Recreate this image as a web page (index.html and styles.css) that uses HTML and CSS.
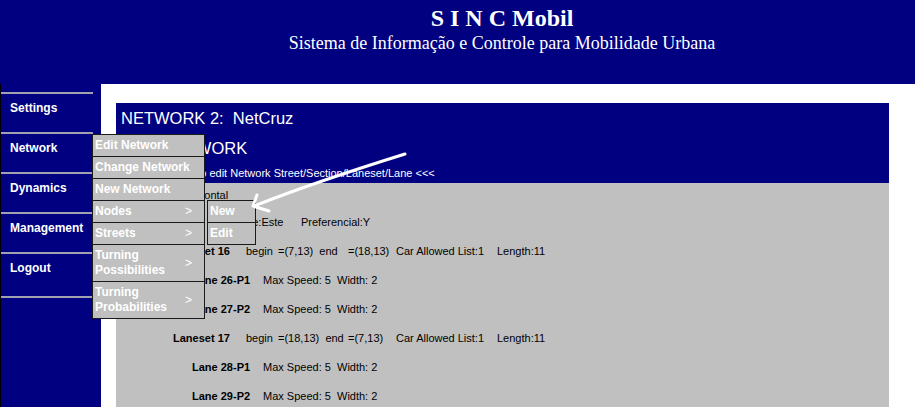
FILE: index.html
```html
<!DOCTYPE html>
<html lang="pt">
<head>
<meta charset="utf-8">
<title>SINC Mobil</title>
<link rel="stylesheet" href="styles.css">
</head>
<body>
<header class="top">
  <div class="title">S I N C Mobil</div>
  <div class="subtitle">Sistema de Informação e Controle para Mobilidade Urbana</div>
</header>
<div class="frame">
  <nav class="side">
    <div class="side-item">Settings</div>
    <div class="side-item">Network</div>
    <div class="side-item">Dynamics</div>
    <div class="side-item">Management</div>
    <div class="side-item side-last">Logout</div>
  </nav>
  <main class="main">
    <section class="panel-head">
      <div class="net-title">NETWORK 2:&nbsp; NetCruz</div>
      <div class="net-title">EDIT NETWORK</div>
      <div class="net-hint">&gt;&gt;&gt; Click to edit Network Street/Section/Laneset/Lane &lt;&lt;&lt;</div>
    </section>
    <section class="panel-body">
      <div class="row row-first"><span>Street 8: Horizontal</span></div>
      <div class="row row-street"><span class="c-sname">Name:Este</span><span>Preferencial:Y</span></div>
      <div class="row row-ls"><b class="c-ls">Laneset 16</b><span class="c-begin">begin</span><span class="c-v1">=(7,13)&nbsp; end</span><span class="c-v2">=(18,13)</span><span class="c-car">Car Allowed List:1</span><span>Length:11</span></div>
      <div class="row row-lane"><b class="c-lane">Lane 26-P1</b><span class="c-speed">Max Speed: 5</span><span>Width: 2</span></div>
      <div class="row row-lane"><b class="c-lane">Lane 27-P2</b><span class="c-speed">Max Speed: 5</span><span>Width: 2</span></div>
      <div class="row row-ls"><b class="c-ls">Laneset 17</b><span class="c-begin">begin</span><span class="c-v1">=(18,13)&nbsp; end</span><span class="c-v2">=(7,13)</span><span class="c-car">Car Allowed List:1</span><span>Length:11</span></div>
      <div class="row row-lane"><b class="c-lane">Lane 28-P1</b><span class="c-speed">Max Speed: 5</span><span>Width: 2</span></div>
      <div class="row row-lane"><b class="c-lane">Lane 29-P2</b><span class="c-speed">Max Speed: 5</span><span>Width: 2</span></div>
    </section>
  </main>
</div>

<div class="dropdown">
  <div class="dd-item">Edit Network</div>
  <div class="dd-item">Change Network</div>
  <div class="dd-item">New Network</div>
  <div class="dd-item"><span>Nodes</span><span class="gt">&gt;</span></div>
  <div class="dd-item"><span>Streets</span><span class="gt">&gt;</span></div>
  <div class="dd-item dd-tall"><span>Turning<br>Possibilities</span><span class="gt">&gt;</span></div>
  <div class="dd-item dd-tall"><span>Turning<br>Probabilities</span><span class="gt">&gt;</span></div>
</div>
<div class="submenu">
  <div class="dd-item">New</div>
  <div class="dd-item">Edit</div>
</div>

<svg class="arrow" width="915" height="407" viewBox="0 0 915 407" aria-hidden="true">
  <path d="M405 154 C360 168 310 184 254 206" fill="none" stroke="#fff" stroke-width="3" stroke-linecap="round"/>
  <path d="M257 195 L253 206 L269 211" fill="none" stroke="#fff" stroke-width="3" stroke-linecap="round" stroke-linejoin="round"/>
</svg>
</body>
</html>
```
FILE: styles.css
```css
html, body {
  margin: 0;
  padding: 0;
}
body {
  width: 915px;
  height: 407px;
  overflow: hidden;
  background: #000080;
  font-family: "Liberation Sans", Arial, sans-serif;
  position: relative;
}
.top {
  height: 84px;
  box-sizing: border-box;
  padding: 4px 0 0 89px;
  text-align: center;
  color: #fff;
  font-family: "Liberation Serif", "Times New Roman", serif;
}
.title {
  font-size: 24px;
  font-weight: bold;
  line-height: 28px;
}
.subtitle {
  font-size: 18px;
  line-height: 22px;
}
.frame {
  display: flex;
  height: 323px;
}
.side {
  width: 100px;
  border-left: 1px solid #000;
  background: #000080;
  padding-top: 8px;
}
.side-item {
  width: 92px;
  border-top: 2px solid #a0a0b0;
  box-sizing: border-box;
  height: 40px;
  padding: 7px 0 0 9px;
  color: #fff;
  font-weight: bold;
  font-size: 12px;
  line-height: 14px;
}
.side-last {
  height: 46px;
  border-bottom: 2px solid #a0a0b0;
}
.main {
  flex: 1;
  background: #fff;
  padding: 19px 26px 0 15px;
  display: flex;
  flex-direction: column;
}
.panel-head {
  height: 80px;
  background: #000080;
  color: #fff;
  padding-left: 5px;
}
.net-title {
  font-size: 16.5px;
  line-height: 30px;
}
.net-hint {
  font-size: 11px;
  line-height: 20px;
  padding-left: 27px;
}
.panel-body {
  flex: 1;
  background: #c0c0c0;
  color: #000;
  font-size: 11px;
}
.row {
  display: flex;
  height: 29px;
  align-items: center;
  white-space: nowrap;
}
.row-first {
  height: 24px;
  padding-left: 18px;
}
.row-street {
  padding-left: 113px;
}
.c-sname { width: 72px; }
.row-ls { padding-left: 57px; }
.row-lane { padding-left: 76px; }
.c-ls { width: 73px; }
.c-begin { width: 32px; }
.c-v1 { width: 70px; }
.c-v2 { width: 48px; }
.c-car { width: 101px; }
.c-lane { width: 71px; }
.c-speed { width: 74px; }

.dropdown {
  position: absolute;
  left: 92px;
  top: 134px;
  width: 113px;
  box-sizing: border-box;
  background: #c0c0c0;
  border: 1px solid #1a1a1a;
  border-bottom: 0;
}
.submenu {
  position: absolute;
  left: 207px;
  top: 200px;
  width: 49px;
  box-sizing: border-box;
  background: #c0c0c0;
  border: 1px solid #1a1a1a;
  border-bottom: 0;
}
.dd-item {
  display: flex;
  justify-content: space-between;
  align-items: center;
  height: 22px;
  box-sizing: border-box;
  border-bottom: 1px solid #1a1a1a;
  padding: 0 12px 0 2px;
  color: #fff;
  font-weight: bold;
  font-size: 12px;
  line-height: 15px;
}
.dd-tall {
  height: 37px;
}
.gt {
  font-weight: normal;
}
.arrow {
  position: absolute;
  left: 0;
  top: 0;
  pointer-events: none;
}
```
